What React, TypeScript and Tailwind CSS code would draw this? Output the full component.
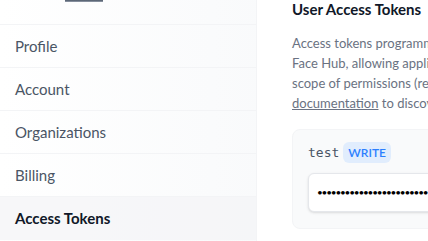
import React from "react";

const items = ["Profile", "Account", "Organizations", "Billing", "Access Tokens"];

export default function App() {
  return (
    <div
      className="flex h-[241px] w-[428px] overflow-hidden bg-white text-gray-800"
      style={{ fontFamily: "Lato, 'Noto Sans', sans-serif" }}
    >
      <aside className="flex w-[257px] shrink-0 flex-col border-r border-gray-100 bg-gradient-to-r from-white to-gray-50">
        <div className="h-[25px] border-b border-gray-100 pl-[65px]">
          <div className="h-[2px] w-[38px] bg-gradient-to-b from-gray-600 to-gray-400" />
        </div>
        {items.map((it, i) => (
          <div
            key={it}
            className={
              "flex h-[43px] shrink-0 items-center pl-[15px] text-[15px] " +
              (i < items.length - 1 ? "border-b border-gray-100 " : "") +
              (it === "Access Tokens" ? "bg-gray-100/70 font-bold text-gray-900" : "text-gray-600")
            }
          >
            {it}
          </div>
        ))}
      </aside>
      <main className="w-[600px] shrink-0 pl-[35px] pt-0">
        <h1 className="text-[15px] font-bold leading-[18px] text-gray-900">User Access Tokens</h1>
        <p className="mt-[15px] text-[13px] leading-[20px] text-gray-500">
          Access tokens programmatically authenticate your identity to the Hugging
          <br />
          Face Hub, allowing applications to perform specific actions specified by the
          <br />
          scope of permissions (read, write, or admin) granted. Visit{" "}
          <br />
          <span className="underline">documentation</span> to discover how to use them.
        </p>
        <div className="mt-[16px] rounded-lg border border-gray-100 bg-gray-50 px-[15px] pb-[16px] pt-[12px]">
          <div className="flex items-center gap-[4px]">
            <span
              className="text-[13px] text-gray-600"
              style={{ fontFamily: "'DejaVu Sans Mono', monospace" }}
            >
              test
            </span>
            <span className="rounded-md bg-blue-100/80 px-[5px] py-[2px] text-[12px] font-semibold leading-[17px] text-blue-500">
              WRITE
            </span>
          </div>
          <div className="mt-[10px] flex h-[39px] items-center rounded-md border border-gray-200 bg-white px-[8px] shadow-sm">
            <span className="text-[10px] tracking-[-1.2px] text-black">
              {"•".repeat(60)}
            </span>
          </div>
        </div>
      </main>
    </div>
  );
}
